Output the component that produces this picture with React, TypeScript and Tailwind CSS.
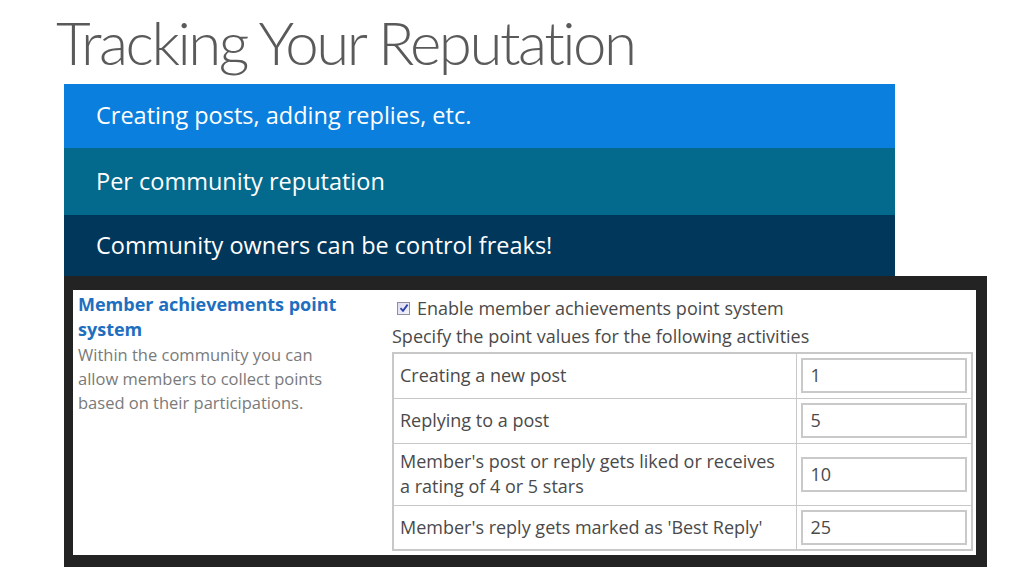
import React from "react";

const rows: { label: React.ReactNode; value: string; tall?: boolean }[] = [
  { label: "Creating a new post", value: "1" },
  { label: "Replying to a post", value: "5" },
  {
    label: (
      <>
        Member's post or reply gets liked or receives
        <br />a rating of 4 or 5 stars
      </>
    ),
    value: "10",
    tall: true,
  },
  { label: "Member's reply gets marked as 'Best Reply'", value: "25" },
];

const bars = [
  { text: "Creating posts, adding replies, etc.", cls: "h-[64px] bg-[#0a7fdd]" },
  { text: "Per community reputation", cls: "h-[67px] bg-[#036a8d]" },
  { text: "Community owners can be control freaks!", cls: "h-[61px] bg-[#02375c]" },
];

function CheckBox() {
  return (
    <span className="flex h-[13px] w-[13px] items-center justify-center border border-[#8f8f9f] bg-gradient-to-br from-[#dcdcf0] to-[#f4f4fb]">
      <svg width="10" height="10" viewBox="0 0 10 10">
        <path d="M1.5 5.2 L4 7.8 L8.6 1.6" fill="none" stroke="#2b3fa8" strokeWidth="1.8" />
      </svg>
    </span>
  );
}

export default function App() {
  return (
    <div className="h-[576px] w-[1024px] overflow-hidden bg-white font-['Open_Sans',sans-serif]">
      <h1 className="pl-[56px] pt-[2px] font-['Lato',sans-serif] text-[60px] font-light leading-[80px] tracking-[-2.5px] text-[#5a5a5a] [font-variant-ligatures:none]">
        Tracking Your Reputation
      </h1>

      <div className="ml-[64px] mt-[2px] w-[831px]">
        {bars.map((b) => (
          <div key={b.text} className={`flex items-center pl-[32px] text-[23.5px] text-white ${b.cls}`}>
            {b.text}
          </div>
        ))}
      </div>

      <div className="ml-[64px] h-[291px] w-[923px] bg-[#232323] pb-[12px] pl-[9px] pr-[11px] pt-[14px]">
        <div className="flex h-full bg-white">
          <div className="w-[319px] pl-[5px] pt-[2px]">
            <div className="text-[18px] font-bold leading-[25px] text-[#1e6fc0]">
              Member achievements point
              <br />
              system
            </div>
            <div className="mt-[1px] text-[16.5px] leading-[24px] text-[#7a7a7a]">
              Within the community you can
              <br />
              allow members to collect points
              <br />
              based on their participations.
            </div>
          </div>

          <div className="pt-[5px] text-[18px] text-[#4a4a4a]">
            <div className="flex items-center gap-[7px] pl-[5px] leading-[26px]">
              <CheckBox />
              <span>Enable member achievements point system</span>
            </div>
            <div className="mt-[2px] leading-[26px]">
              Specify the point values for the following activities
            </div>
            <table className="mt-[3px] w-[581px] border-collapse border-2 border-[#c8c8c8]">
              <tbody>
                {rows.map((r) => (
                  <tr key={r.value} className={r.tall ? "h-[62px]" : "h-[45px]"}>
                    <td className="w-[403px] border border-[#c8c8c8] pl-[6px] leading-[25px]">{r.label}</td>
                    <td className="border border-[#c8c8c8] px-[4px]">
                      <div className="flex h-[35px] w-[166px] items-center border-2 border-[#c9c9c9] pl-[8px]">
                        {r.value}
                      </div>
                    </td>
                  </tr>
                ))}
              </tbody>
            </table>
          </div>
        </div>
      </div>
    </div>
  );
}
